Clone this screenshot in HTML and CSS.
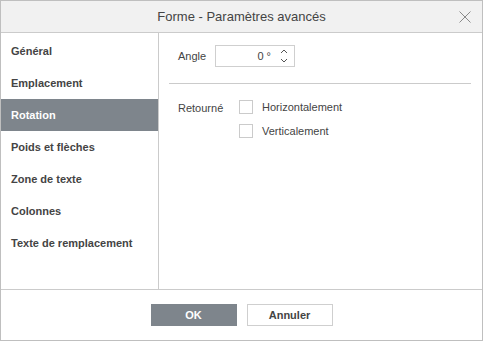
FILE: index.html
```html
<!DOCTYPE html>
<html>
<head>
<meta charset="utf-8">
<link rel="stylesheet" href="styles.css">
</head>
<body>
<div class="dialog">
  <div class="header">
    <span class="title">Forme - Paramètres avancés</span>
    <svg class="close" width="12" height="12" viewBox="0 0 12 12"><path d="M0.5 0.5 L11.5 11.5 M11.5 0.5 L0.5 11.5" stroke="#8a8a8a" stroke-width="1" fill="none"/></svg>
  </div>
  <div class="main">
    <div class="sidebar">
      <div class="item">Général</div>
      <div class="item">Emplacement</div>
      <div class="item active">Rotation</div>
      <div class="item">Poids et flèches</div>
      <div class="item">Zone de texte</div>
      <div class="item">Colonnes</div>
      <div class="item">Texte de remplacement</div>
    </div>
    <div class="content">
      <div class="row angle-row">
        <span class="label">Angle</span>
        <div class="spin">
          <span class="value">0 °</span>
          <svg class="arrows" width="8" height="16" viewBox="0 0 8 16"><path d="M1 5 L4 2 L7 5 M1 11 L4 14 L7 11" stroke="#555" stroke-width="1" fill="none"/></svg>
        </div>
      </div>
      <div class="sep"></div>
      <div class="flip">
        <span class="label flip-label">Retourné</span>
        <div class="checks">
          <label class="check"><span class="box"></span>Horizontalement</label>
          <label class="check"><span class="box"></span>Verticalement</label>
        </div>
      </div>
    </div>
  </div>
  <div class="footer">
    <button class="btn primary">OK</button>
    <button class="btn">Annuler</button>
  </div>
</div>
</body>
</html>
```
FILE: styles.css
```css
* { box-sizing: border-box; }
body { margin: 0; font-family: "Liberation Sans", Arial, sans-serif; color: #444; }
.dialog { width: 483px; height: 341px; border: 1px solid #bfbfbf; display: flex; flex-direction: column; background: #fff; }
.header { height: 32px; flex: none; background: #f1f1f1; border-bottom: 1px solid #cbcbcb; display: flex; align-items: center; justify-content: center; position: relative; }
.title { font-size: 13px; color: #444; }
.close { position: absolute; right: 11px; top: 10px; }
.main { height: 257px; flex: none; display: flex; border-bottom: 1px solid #cbcbcb; }
.sidebar { width: 158px; flex: none; border-right: 1px solid #cbcbcb; padding-top: 2px; }
.item { height: 32px; line-height: 32px; padding-left: 10px; font-size: 11px; font-weight: bold; color: #444; }
.item.active { background: #7e858c; color: #fff; }
.content { flex: 1; padding: 12px 11px 0 10px; }
.row { display: flex; align-items: center; }
.angle-row { padding-left: 9px; }
.label { font-size: 11px; color: #444; }
.angle-row .label { width: 37px; }
.spin { width: 80px; height: 22px; border: 1px solid #cfcfcf; display: flex; align-items: center; justify-content: flex-end; padding-right: 6px; }
.value { font-size: 11px; margin-right: 9px; }
.arrows { display: block; }
.sep { height: 1px; background: #cbcbcb; margin-top: 16px; }
.flip { display: flex; padding-left: 9px; margin-top: 16px; }
.flip-label { width: 61px; line-height: 14px; padding-top: 1px; }
.checks { display: flex; flex-direction: column; gap: 10px; }
.check { display: flex; align-items: center; font-size: 11px; color: #444; height: 14px; }
.box { width: 14px; height: 14px; border: 1px solid #cbcbcb; margin-right: 9px; }
.footer { flex: 1; display: flex; justify-content: center; align-items: flex-start; padding-top: 14px; gap: 10px; }
.btn { width: 86px; height: 22px; font-family: "Liberation Sans", Arial, sans-serif; font-size: 11px; font-weight: bold; border: 1px solid #cfcfcf; background: #fff; color: #444; padding: 0; }
.btn.primary { background: #7e858c; border-color: #7e858c; color: #fff; }
```
